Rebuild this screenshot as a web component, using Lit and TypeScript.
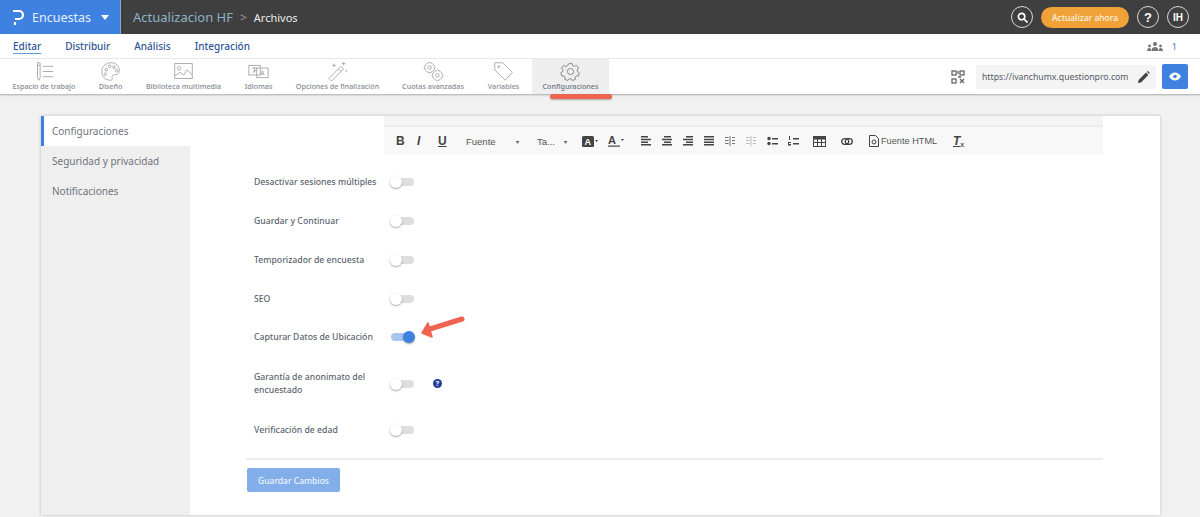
import { LitElement, html, css, svg } from "lit";
import { customElement } from "lit/decorators.js";

const tools = [
  { label: "Espacio de trabajo", w: 86, icon: svg`<path d="M4 2h3v17l-1.500 3L4 19zM4 5h3M10 6h12M10 12h12M10 18h12" />` },
  { label: "Diseño", w: 47, icon: svg`<path d="M13 2C7 2 2 6 2 12s4 10 10 10c2 0 2-1 2-2s-1-3 1-4 7 1 7-5-4-9-9-9z" /><circle cx="7" cy="10" r="1.500" /><circle cx="11" cy="6" r="1.500" /><circle cx="16" cy="7" r="1.500" /><circle cx="19" cy="11" r="1.500" /><circle cx="6" cy="15" r="1.500" />` },
  { label: "Biblioteca multimedia", w: 99, icon: svg`<rect x="2" y="3" width="20" height="17" /><circle cx="7" cy="8.500" r="2" /><path d="M2 17l6-4 4 3 4-6 6 6" />` },
  { label: "Idiomas", w: 51, icon: svg`<rect x="1" y="5" width="13" height="11" /><rect x="10" y="8" width="13" height="11" /><path d="M4.500 8h6M7.500 8v5M5 13l5-3M14.500 16l2-5 2 5M15 15h3" />` },
  { label: "Opciones de finalización", w: 107, icon: svg`<path d="M2 20l14-14 3 3L5 23zM13 9l3 3M19 1v4M21 3h-4M8 3v4M6 5h4M22 10v3" />` },
  { label: "Cuotas avanzadas", w: 84, icon: svg`<rect x="2" y="2" width="11" height="11" rx="4.500" transform="rotate(45 7.500 7.500)" /><rect x="11" y="11" width="11" height="11" rx="4.500" transform="rotate(45 16.500 16.500)" /><circle cx="7.500" cy="7.500" r="2" /><circle cx="16.500" cy="16.500" r="2" />` },
  { label: "Variables", w: 57, icon: svg`<path d="M2 2h9l11 11-8 9L2 10z" /><circle cx="6.500" cy="6.500" r="1.200" />` },
];

const labels = [
  "Desactivar sesiones múltiples",
  "Guardar y Continuar",
  "Temporizador de encuesta",
  "SEO",
];

@customElement("app-root")
export class AppRoot extends LitElement {
  static styles = css`
    :host {
      display: block;
      width: 1200px;
      height: 517px;
      overflow: hidden;
      background: #f1f1f1;
      font-family: "Noto Sans", "Open Sans", sans-serif;
      color: #5d6570;
    }
    svg { display: block; }

    .top {
      height: 34px;
      background: #3f3f3f;
      display: flex;
      align-items: center;
      color: #fff;
    }
    .brand {
      width: 121px;
      height: 34px;
      background: #3f81e0;
      border-right: 1px solid #8fa8c8;
      box-sizing: border-box;
      display: flex;
      align-items: center;
      padding-left: 13px;
      gap: 8px;
      font-size: 12.5px;
      color: #e8f0fb;
    }
    .caret {
      width: 0;
      height: 0;
      margin-left: 2px;
      border: 4px solid transparent;
      border-top: 5px solid #fff;
      border-bottom: 0;
    }
    .crumbs {
      display: flex;
      align-items: center;
      flex: 1;
      padding-left: 12px;
      gap: 7px;
    }
    .project { font-size: 13px; color: #8ab3c6; }
    .sep { font-size: 12px; color: #9a9a9a; }
    .page { font-size: 11px; color: #ececec; }
    .top-actions {
      display: flex;
      align-items: center;
      padding-right: 11px;
      gap: 8px;
    }
    .round {
      width: 22px;
      height: 22px;
      box-sizing: border-box;
      border: 1px solid #d8d8d8;
      border-radius: 50%;
      display: flex;
      align-items: center;
      justify-content: center;
      font-family: "Liberation Sans", sans-serif;
      font-size: 10px;
      font-weight: 700;
      color: #fff;
    }
    .round.help { font-size: 13px; }
    .update {
      width: 88px;
      height: 21px;
      border-radius: 11px;
      background: #f0a138;
      color: #fff3e0;
      font-size: 8.5px;
      font-weight: 500;
      display: flex;
      align-items: center;
      justify-content: center;
    }

    .tabs {
      height: 24px;
      background: #fff;
      border-bottom: 1px solid #ececec;
      display: flex;
      align-items: center;
      padding-left: 13px;
      gap: 24px;
      font-size: 10px;
      font-weight: 500;
      color: #2f5597;
    }
    .tabs .on {
      text-decoration: underline;
      text-decoration-color: #5b9bd5;
      text-underline-offset: 3px;
    }
    .users {
      margin-left: auto;
      padding-right: 23px;
      display: flex;
      align-items: center;
      gap: 9px;
      color: #5b8fdc;
      font-size: 9px;
      font-weight: 500;
    }

    .tools {
      height: 35px;
      background: #fff;
      box-shadow: 0 1px 2px rgba(0, 0, 0, 0.3);
      display: flex;
      position: relative;
      padding-left: 1px;
    }
    .tool {
      display: flex;
      flex-direction: column;
      align-items: center;
      font-size: 7.2px;
      font-weight: 500;
      line-height: 9px;
      color: #858b93;
      padding-top: 2px;
      box-sizing: border-box;
      white-space: nowrap;
    }
    .tool svg {
      width: 21px;
      height: 21px;
      fill: none;
      stroke: #a3a3a3;
      stroke-width: 1;
    }
    .tool.active {
      background: #eeeeee;
      color: #6f7680;
    }
    .tool.active svg { stroke: #7d7d7d; }
    .tool-right {
      margin-left: auto;
      display: flex;
      align-items: center;
      padding-right: 12px;
    }
    .url {
      width: 180px;
      height: 24px;
      margin-left: 11px;
      background: #f4f4f5;
      border-radius: 2px;
      box-sizing: border-box;
      padding: 0 6px;
      display: flex;
      align-items: center;
      justify-content: space-between;
      font-size: 8.7px;
      color: #555c66;
    }
    .eye {
      width: 26px;
      height: 25px;
      margin-left: 6px;
      background: #3f81e0;
      border-radius: 2px;
      display: flex;
      align-items: center;
      justify-content: center;
    }
    .mark {
      position: absolute;
      left: 550px;
      top: 35px;
      width: 62px;
      height: 5px;
      border-radius: 3px;
      background: #ee6450;
      box-shadow: 0 1px 2px rgba(0, 0, 0, 0.3);
    }

    .card {
      margin: 22px 0 0 41px;
      width: 1119px;
      height: 399px;
      background: #fff;
      box-shadow: 0 0 3px rgba(0, 0, 0, 0.22);
      display: flex;
    }
    .side {
      width: 149px;
      background: #efefef;
      flex: none;
      font-size: 10px;
      color: #6e747d;
    }
    .side div {
      height: 30px;
      display: flex;
      align-items: center;
      padding-left: 11px;
    }
    .side .on {
      background: #fff;
      border-left: 3px solid #3f81e0;
      padding-left: 8px;
    }
    .main {
      flex: 1;
      padding-left: 56px;
      display: flex;
      flex-direction: column;
      min-width: 0;
    }
    .editor {
      margin: 0 57px 8px 138px;
      background: #f4f4f4;
      padding-top: 9px;
    }
    .bar {
      height: 28px;
      background: #f8f8f8;
      border-top: 2px solid #ececec;
      display: flex;
      align-items: center;
      padding-left: 12px;
      font-family: "Liberation Sans", sans-serif;
      font-size: 9.5px;
      color: #555;
    }
    .bar svg { fill: #444; flex: none; }
    .b { width: 21px; font-size: 12px; font-weight: 700; color: #444; }
    .row {
      display: flex;
      align-items: center;
      padding-left: 8px;
      font-size: 8.7px;
      font-weight: 500;
      color: #5d6570;
      height: 38.75px;
      flex: none;
    }
    .row .lbl { width: 137px; line-height: 13px; padding-top: 1px; }
    .sw {
      width: 23px;
      height: 8px;
      border-radius: 4px;
      background: #dedede;
      position: relative;
      flex: none;
    }
    .sw::after {
      content: "";
      position: absolute;
      left: -1px;
      top: -2px;
      width: 12px;
      height: 12px;
      border-radius: 50%;
      background: #fff;
      box-shadow: 0 1px 2px rgba(0, 0, 0, 0.35);
    }
    .sw.on { background: #a9c6f0; }
    .sw.on::after { left: 12px; background: #3f81e0; }
    .q {
      width: 9px;
      height: 9px;
      margin-left: 19px;
      border-radius: 50%;
      background: #1f3f93;
      color: #fff;
      font-size: 7px;
      font-weight: 700;
      line-height: 9px;
      text-align: center;
    }
    .arrow {
      position: absolute;
      left: 418px;
      top: 314px;
      width: 50px;
      height: 28px;
    }
    .rule {
      margin: 9px 57px 0 0;
      height: 2px;
      background: #ececec;
      flex: none;
    }
    .save {
      margin: 8px 0 0 1px;
      width: 93px;
      height: 24px;
      border-radius: 2px;
      background: #82aeea;
      color: #eef4fd;
      font-size: 8.5px;
      font-weight: 500;
      display: flex;
      align-items: center;
      justify-content: center;
      flex: none;
    }
  `;

  render() {
    return html`
      <div class="top">
        <div class="brand">
          <svg width="11" height="15" viewBox="0 0 11 15" fill="none" stroke="#fff" stroke-width="2.200">
            <path d="M0 1h6a3.500 3.500 0 0 1 0 8H2" /><path d="M2 12V15" />
          </svg>
          Encuestas <span class="caret"></span>
        </div>
        <div class="crumbs">
          <span class="project">Actualizacion HF</span><span class="sep">&gt;</span><span class="page">Archivos</span>
        </div>
        <div class="top-actions">
          <div class="round">
            <svg width="11" height="11" viewBox="0 0 12 12" fill="none" stroke="#fff" stroke-width="1.800">
              <circle cx="5" cy="5" r="3.500" /><path d="M8 8l3.500 3.500" />
            </svg>
          </div>
          <div class="update">Actualizar ahora</div>
          <div class="round help">?</div>
          <div class="round">IH</div>
        </div>
      </div>

      <div class="tabs">
        <span class="on">Editar</span><span>Distribuir</span><span>Análisis</span><span>Integración</span>
        <span class="users">
          <svg width="16" height="9" viewBox="0 0 16 9" fill="#777">
            <circle cx="8" cy="2" r="2" /><path d="M4.500 9c0-3 1.500-4 3.500-4s3.500 1 3.500 4z" />
            <circle cx="2.500" cy="4" r="1.400" /><path d="M0 9c0-2 1-3 2.500-3S4 7 4 9z" />
            <circle cx="13.500" cy="4" r="1.400" /><path d="M12 9c0-2 0-3 1.500-3S16 7 16 9z" />
          </svg>
          1
        </span>
      </div>

      <div class="tools">
        ${tools.map(
          (t) => html`<div class="tool" style="width:${t.w}px">
            <svg viewBox="0 0 24 24">${t.icon}</svg>${t.label}
          </div>`
        )}
        <div class="tool active" style="width:77px">
          <svg viewBox="0 0 24 24">
            <path d="M10 3h4l.7 2.500 1.800.8 2.300-1.300 2.500 3-1.600 2 .3 2 2 1.400-1 3.700-2.500-.1-1.300 1.500.4 2.500-3.600 1.300-1.500-2h-2l-1.500 2-3.600-1.300.4-2.500-1.300-1.500-2.500.1-1-3.700 2-1.400.3-2-1.600-2 2.500-3 2.300 1.300 1.800-.8z" />
            <circle cx="12" cy="12" r="3.500" />
          </svg>
          Configuraciones
        </div>
        <div class="mark"></div>
        <div class="tool-right">
          <svg width="14" height="14" viewBox="0 0 14 14" fill="none" stroke="#666" stroke-width="1.300">
            <rect x="1" y="1" width="4" height="4" /><rect x="9" y="1" width="4" height="4" /><rect x="1" y="9" width="4" height="4" />
            <path d="M7 1v3M7 7h3M9 9l4 4M13 9l-4 4" />
          </svg>
          <div class="url">
            https://ivanchumx.questionpro.com
            <svg width="12" height="12" viewBox="0 0 12 12" fill="#444">
              <path d="M0 12l.6-3L8 1.600 10.400 4 3 11.400zM8.800.8l1-.8 2 2-.8 1z" />
            </svg>
          </div>
          <div class="eye">
            <svg width="12" height="9" viewBox="0 0 12 9">
              <path d="M0 4.500C2 1.500 4 .5 6 .5s4 1 6 4c-2 3-4 4-6 4s-4-1-6-4z" fill="#fff" />
              <circle cx="6" cy="4.500" r="1.800" fill="#3f81e0" />
            </svg>
          </div>
        </div>
      </div>

      <div class="card">
        <div class="side">
          <div class="on">Configuraciones</div>
          <div>Seguridad y privacidad</div>
          <div>Notificaciones</div>
        </div>
        <div class="main">
          <div class="editor">
            <div class="bar">
              <span class="b">B</span><span class="b" style="font-style:italic">I</span><span class="b" style="text-decoration:underline;width:28px">U</span>
              <span style="width:50px">Fuente</span><span style="width:21px;font-size:6px">▾</span>
              <span style="width:27px">Ta...</span><span style="width:18px;font-size:6px">▾</span>
              <svg width="16" height="11" viewBox="0 0 16 11" style="margin-right:10px"><rect width="12" height="11" rx="1.500" /><text x="2.500" y="9" font-size="9" font-weight="700" fill="#fff">A</text><path d="M13 4h3l-1.500 2z" /></svg>
              <svg width="16" height="12" viewBox="0 0 16 12" style="margin-right:17px"><text x="0" y="9" font-size="11" font-weight="700">A</text><rect x="0" y="10.500" width="12" height="1.200" /><path d="M13 4h3l-1.500 2z" /></svg>
              ${[0, 1, 2, 3].map((k) => html`<svg width="11" height="10" viewBox="0 0 11 10" style="margin-right:10px">
                <path d="M${k == 2 ? 3 : k == 1 ? 2 : 0} 0h${k == 3 ? 10 : 7}v1.600H${k == 2 ? 3 : k == 1 ? 2 : 0}zM0 2.700h10v1.600H0zM${k == 2 ? 3 : k == 1 ? 2 : 0} 5.400h${k == 3 ? 10 : 7}V7H${k == 2 ? 3 : k == 1 ? 2 : 0}zM0 8h10v1.600H0z" />
              </svg>`)}
              <svg width="10" height="10" viewBox="0 0 10 10" style="margin-right:11px;fill:#777"><path d="M0 1h3.500v1H0zM0 4h3.500v1H0zM0 7h3.500v1H0zM4.500 0h1v10h-1zM7 1h3v1H7zM7 4h3v1H7zM7 7h3v1H7z" /></svg>
              <svg width="10" height="10" viewBox="0 0 10 10" style="margin-right:11px;fill:#bbb"><path d="M0 1h3.500v1H0zM0 4h3.500v1H0zM0 7h3.500v1H0zM4.500 0h1v10h-1zM7 1h3v1H7zM7 4h3v1H7zM7 7h3v1H7z" /></svg>
              <svg width="11" height="10" viewBox="0 0 11 10" style="margin-right:10px"><circle cx="2" cy="2.500" r="1.700" /><circle cx="2" cy="7.500" r="1.700" /><path d="M5 2h6v1.500H5zM5 7h6v1.500H5z" /></svg>
              <svg width="11" height="10" viewBox="0 0 11 10" style="margin-right:14px"><path d="M1 0h1v4H1zM0 6h3v1H1v1h2v1.500H0zM5 2h6v1.500H5zM5 7h6v1.500H5z" /></svg>
              <svg width="13" height="11" viewBox="0 0 13 11" style="margin-right:15px"><path d="M0 0h13v11H0zM1 3.500V6h3V3.500zM5 3.500V6h3V3.500zM9 3.500V6h3V3.500zM1 7v3h3V7zM5 7v3h3V7zM9 7v3h3V7z" fill-rule="evenodd" /></svg>
              <svg width="12" height="7" viewBox="0 0 12 7" style="margin-right:16px;fill:none;stroke:#444;stroke-width:1.300"><rect x=".7" y=".7" width="7" height="5.600" rx="2.800" /><rect x="4.300" y=".7" width="7" height="5.600" rx="2.800" /></svg>
              <svg width="10" height="12" viewBox="0 0 10 12" style="margin-right:2px;fill:none;stroke:#444"><path d="M.5.500h6l3 3v8H.5z" /><circle cx="5" cy="7" r="2" /></svg>
              <span style="width:72px;font-size:9.200px;white-space:nowrap">Fuente HTML</span>
              <span style="font-style:italic;font-weight:700;font-size:12px;text-decoration:underline;color:#444">T</span><span style="font-size:7px;font-weight:700;margin-top:6px">x</span>
            </div>
          </div>

          ${labels.map(
            (l) => html`<div class="row"><div class="lbl">${l}</div><div class="sw"></div></div>`
          )}
          <div class="row"><div class="lbl">Capturar Datos de Ubicación</div><div class="sw on"></div></div>
          <div class="row" style="height:53.5px"><div class="lbl">Garantía de anonimato del encuestado</div><div class="sw"></div><div class="q">?</div></div>
          <div class="row"><div class="lbl">Verificación de edad</div><div class="sw"></div></div>
          <div class="rule"></div>
          <div class="save">Guardar Cambios</div>
        </div>
      </div>
      <svg class="arrow" viewBox="0 0 50 28">
        <path d="M44 5L12 15" stroke="#ee6450" stroke-width="5" stroke-linecap="round" />
        <path d="M4 19l6-10 4 14z" fill="#ee6450" stroke="#ee6450" stroke-width="1.500" stroke-linejoin="round" />
      </svg>
    `;
  }
}
